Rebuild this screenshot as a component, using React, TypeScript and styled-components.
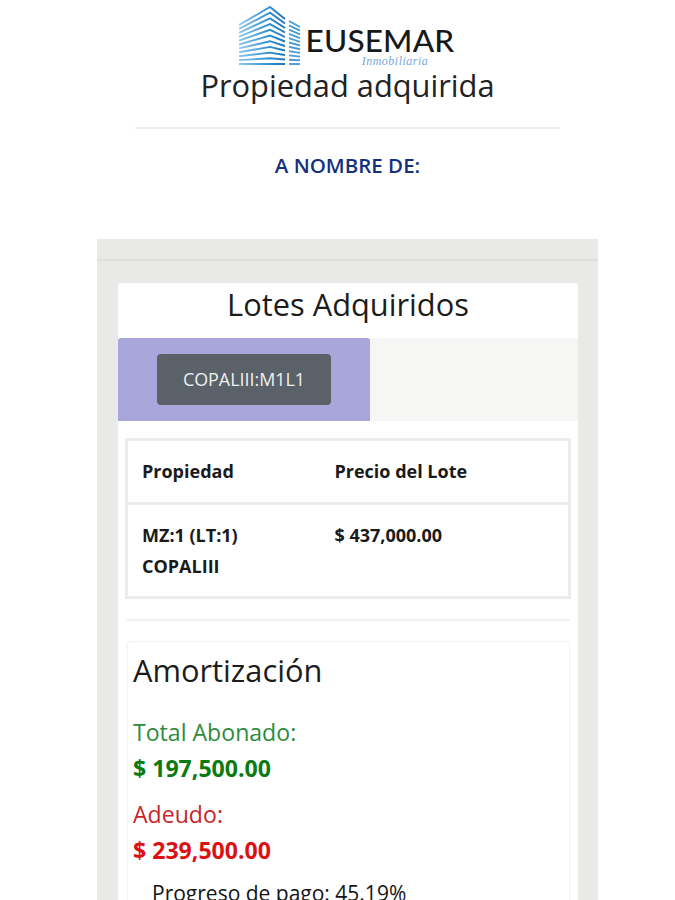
import styled, { createGlobalStyle } from 'styled-components';

const GlobalStyle = createGlobalStyle`
  html,
  body {
    margin: 0;
    height: 900px;
    overflow: hidden;
    background: #fff;
  }

  * {
    box-sizing: border-box;
  }
`;

const stripes = [0, 1, 2, 3, 4, 5, 6, 7, 8, 9, 10];

const BuildingLogo = () => (
  <svg width='63' height='61' viewBox='0 0 63 61' fill='none' aria-hidden='true'>
    <defs>
      <linearGradient id='faceLeft' gradientUnits='userSpaceOnUse' x1='0' y1='0' x2='46' y2='0'>
        <stop offset='0' stopColor='#8cc8ec' />
        <stop offset='0.65' stopColor='#2f8fd2' />
        <stop offset='1' stopColor='#1f74b8' />
      </linearGradient>
    </defs>
    {stripes.map((i) => {
      const t = i / 10;
      return (
        <g key={i} strokeWidth='1.9'>
          <path
            d={`M0 ${19 + 39 * t} L31 ${1 + 57 * t} L46 ${13 + 45 * t}`}
            stroke='url(#faceLeft)'
          />
          <path d={`M50 ${15 + 43 * t} L61 ${21 + 37 * t}`} stroke='#4a9bd8' />
        </g>
      );
    })}
  </svg>
);

const App = () => (
  <Page>
    <GlobalStyle />
    <LogoRow>
      <BuildingLogo />
      <LogoText>
        <LogoName>EUSEMAR</LogoName>
        <LogoTagline>Inmobiliaria</LogoTagline>
      </LogoText>
    </LogoRow>
    <PageTitle>Propiedad adquirida</PageTitle>
    <HeaderRule />
    <OwnerLabel>A NOMBRE DE:</OwnerLabel>

    <Panel>
      <PanelHeader />
      <PanelBody>
        <Card>
          <CardTitle>Lotes Adquiridos</CardTitle>
          <TabStrip>
            <ActiveTab>
              <LotButton>COPALIII:M1L1</LotButton>
            </ActiveTab>
          </TabStrip>
          <CardContent>
            <LotTable>
              <thead>
                <tr>
                  <HeadCell>Propiedad</HeadCell>
                  <HeadCell>Precio del Lote</HeadCell>
                </tr>
              </thead>
              <tbody>
                <tr>
                  <BodyCell>
                    MZ:1 (LT:1)
                    <br />
                    COPALIII
                  </BodyCell>
                  <BodyCell>$ 437,000.00</BodyCell>
                </tr>
              </tbody>
            </LotTable>
            <SectionRule />
            <AmortizationCard>
              <AmortizationTitle>Amortización</AmortizationTitle>
              <AmountLabel $tone='#2e8b3d'>Total Abonado:</AmountLabel>
              <AmountValue $tone='#0b7a0f'>$ 197,500.00</AmountValue>
              <AmountLabel $tone='#c9252c' $spaced>
                Adeudo:
              </AmountLabel>
              <AmountValue $tone='#dc1014'>$ 239,500.00</AmountValue>
              <ProgressText>Progreso de pago: 45.19%</ProgressText>
            </AmortizationCard>
          </CardContent>
        </Card>
      </PanelBody>
    </Panel>
  </Page>
);

export default App;

const Page = styled.div`
  display: flex;
  flex-direction: column;
  align-items: center;

  width: 675px;
  height: 900px;
  padding: 6px 0 0 20px;
  overflow: hidden;

  font-family: 'Open Sans', 'Liberation Sans', sans-serif;
  color: #1c1c1c;
`;

const LogoRow = styled.div`
  display: flex;
  align-items: flex-start;
  gap: 4px;

  height: 61px;
  margin-left: -2px;
`;

const LogoText = styled.div`
  display: flex;
  flex-direction: column;
  align-items: center;

  padding-top: 20px;
`;

const LogoName = styled.div`
  font-family: Lato, 'Open Sans', sans-serif;
  font-size: 31.5px;
  font-weight: 500;
  line-height: 28px;
  letter-spacing: 0.2px;
  color: #17181a;
`;

const LogoTagline = styled.div`
  margin: 1px 0 0 30px;

  font-family: 'Liberation Serif', serif;
  font-size: 12px;
  font-style: italic;
  line-height: 13px;
  letter-spacing: 0.5px;
  color: #7aa6d4;
`;

const PageTitle = styled.h1`
  margin: 0;

  font-size: 30.8px;
  font-weight: 400;
  line-height: 36px;
  color: #222;
`;

const HeaderRule = styled.hr`
  width: 425px;
  margin: 24px 0 0;
  border: 0;
  border-top: 2px solid #eeeeee;
`;

const OwnerLabel = styled.div`
  margin-top: 23px;

  font-size: 20.5px;
  font-weight: 600;
  line-height: 27px;
  color: #15307f;
`;

const Panel = styled.section`
  flex: none;

  width: 501px;
  margin-top: 60px;
  background: #e9e9e8;
`;

const PanelHeader = styled.div`
  height: 22px;
  border-bottom: 2px solid #dfdfde;
`;

const PanelBody = styled.div`
  padding: 22px 20px 0 21px;
`;

const Card = styled.div`
  background: #fff;
  border-radius: 3px 3px 0 0;
`;

const CardTitle = styled.h2`
  height: 55px;
  margin: 0;

  font-size: 30.8px;
  font-weight: 400;
  line-height: 42px;
  text-align: center;
  color: #1c1c1c;
`;

const TabStrip = styled.div`
  height: 83px;
  background: #f6f6f5;
`;

const ActiveTab = styled.div`
  width: 252px;
  height: 83px;
  padding: 16px 0 0 39px;
  background: #a9a6dc;
  border-radius: 3px 3px 0 0;
`;

const LotButton = styled.button`
  width: 174px;
  height: 51px;
  padding: 0;
  border: 0;
  border-radius: 4px;
  background: #5a6169;

  font-family: inherit;
  font-size: 17.9px;
  line-height: 51px;
  color: #eef0f0;
`;

const CardContent = styled.div`
  padding: 17px 7px 0;
`;

const LotTable = styled.table`
  width: 446px;
  border-collapse: collapse;
  border: 3px solid #ececec;
  table-layout: fixed;
`;

const HeadCell = styled.th`
  height: 64px;
  padding: 0 14px 2px;
  border-bottom: 3px solid #ececec;

  font-size: 18px;
  font-weight: 700;
  text-align: left;
  color: #1a1a1a;

  &:first-child {
    width: 194px;
  }
`;

const BodyCell = styled.td`
  height: 94px;
  padding: 15px 14px 0;
  vertical-align: top;

  font-size: 18px;
  font-weight: 700;
  line-height: 31px;
  color: #1a1a1a;
`;

const SectionRule = styled.hr`
  width: 443px;
  margin: 20px 0 0 2px;
  border: 0;
  border-top: 2px solid #f0f0f0;
`;

const AmortizationCard = styled.div`
  height: 300px;
  margin: 20px 1px 0 2px;
  padding: 7px 5px 0;
  border: 1px solid #f2f2f2;
  border-radius: 3px;
`;

const AmortizationTitle = styled.h3`
  margin: 0 0 26px;

  font-size: 30.8px;
  font-weight: 400;
  line-height: 42px;
  color: #1c1c1c;
`;

const AmountLabel = styled.div<{ $tone: string; $spaced?: boolean }>`
  margin-top: ${({ $spaced }) => ($spaced ? '16px' : '0')};

  font-size: 23.1px;
  line-height: 30px;
  color: ${({ $tone }) => $tone};
`;

const AmountValue = styled.div<{ $tone: string }>`
  margin-top: 6px;

  font-size: 23.1px;
  font-weight: 700;
  line-height: 30px;
  color: ${({ $tone }) => $tone};
`;

const ProgressText = styled.div`
  margin: 15px 0 0 19px;

  font-size: 21px;
  font-weight: 500;
  line-height: 26px;
  color: #141414;
`;
